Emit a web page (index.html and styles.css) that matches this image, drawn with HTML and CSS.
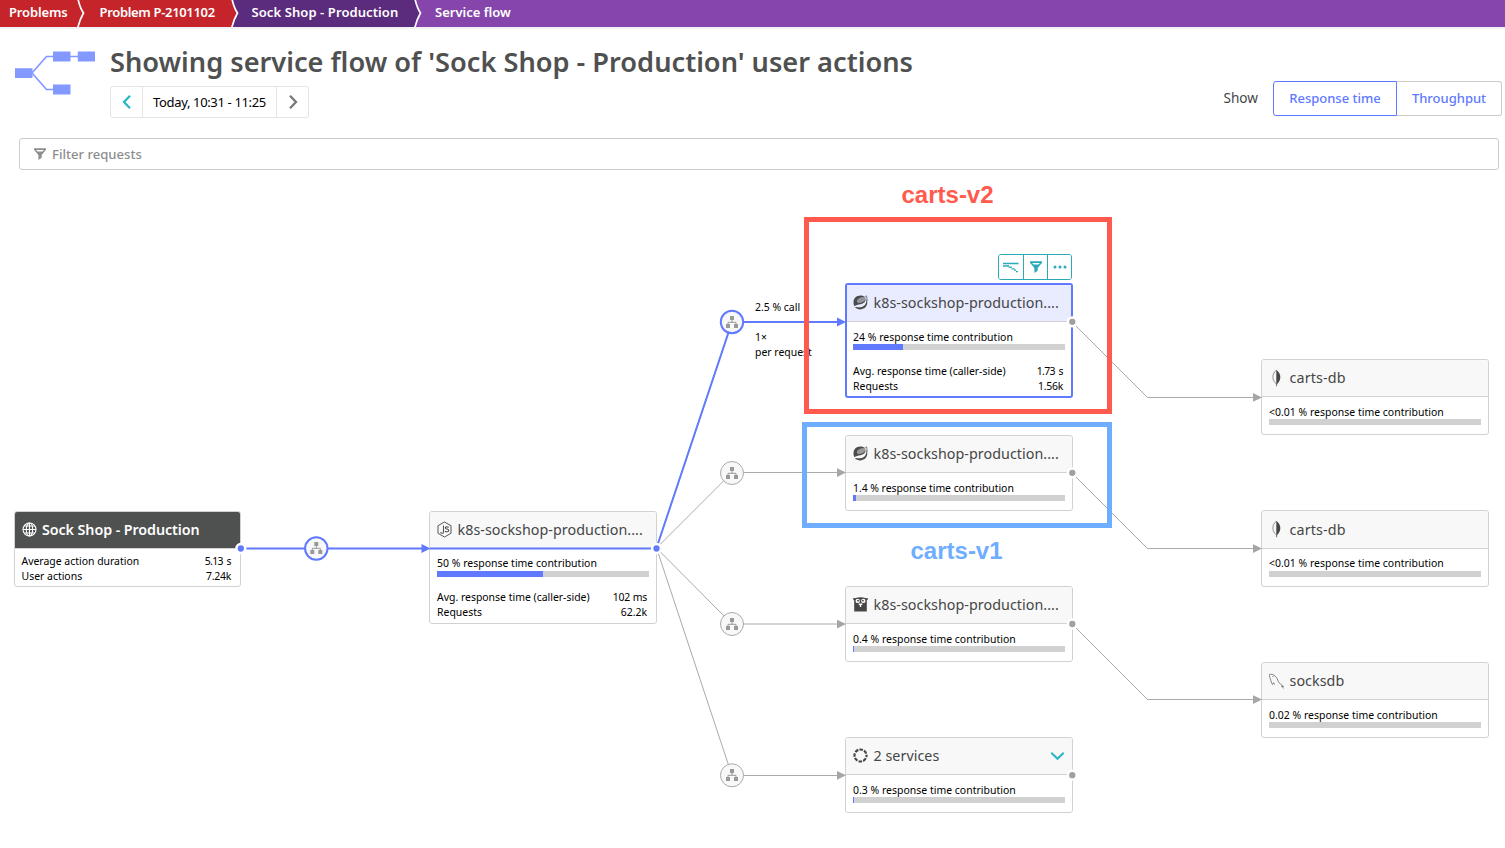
FILE: index.html
```html
<!DOCTYPE html>
<html lang="en">
<head>
<meta charset="utf-8">
<title>Service flow</title>
<link rel="stylesheet" href="styles.css">
</head>
<body>
<svg class="defs" width="0" height="0" aria-hidden="true">
  <symbol id="spring" viewBox="0 0 15 15">
    <path fill="#4b4c4c" d="M1.500 11.300C-.6 7.500.6 2.800 4.400 1.100C7.300-.1 10.300.4 12.200 2.200C8.500 2 5.500 2.800 4.200 5.200C3.600 6.800 4.300 7.700 6 7.800C8.700 7.900 11.300 6.500 12.700 3.800C12.800 6.700 10.600 8.500 7.500 9.200C5.200 9.700 2.800 9.900 1.500 11.300Z"/>
    <path fill="#4b4c4c" fill-opacity=".55" d="M4.200 5.200C5.500 2.800 8.500 2 12.200 2.200L12.700 3.800C11.300 6.500 8.700 7.900 6 7.800C4.300 7.700 3.600 6.800 4.200 5.200Z"/>
    <path fill="#4b4c4c" d="M1.900 12C4 11.700 5.500 12.300 7.500 12.200C11.200 12 13.500 9.200 13.700 3.800C15.500 8.500 13.300 14.200 7.600 14.400C5 14.400 3.100 13.500 1.900 12Z"/>
    <path fill="none" stroke="#4b4c4c" stroke-width=".7" d="M12.300 1.600L13.500.8Q14.300 3.500 14 6"/>
  </symbol>
  <symbol id="tree" viewBox="0 0 14 14">
    <path fill="#999" d="M5 1h4v4H5zM1 9h4v4H1zM9 9h4v4H9z"/>
    <path fill="none" stroke="#999" d="M7 5v2.500M3 9V7.300h8V9"/>
  </symbol>
  <symbol id="funnel" viewBox="0 0 12 12">
    <path fill="currentColor" fill-rule="evenodd" d="M0 .3h12v1.500L7.700 6.900v2.900L4.400 12V6.900L0 1.800ZM2.200 1.900l1.300 1.700h5l1.300-1.700Z"/>
  </symbol>
  <symbol id="leaf" viewBox="0 0 15 18">
    <path fill="none" stroke="#666" stroke-width=".7" d="M7.500 1C4.500 3.500 3.800 6 3.900 8.600C4.100 11.300 5.500 13.500 7.500 15"/>
    <path fill="#454646" d="M7.300.8C10.500 3.500 11.600 6 11.300 9C11 11.500 9.800 13.300 8.100 14.900V17.300H7.300Z"/>
  </symbol>
</svg>

<nav class="crumbs">
  <a class="crumb red c1">Problems</a>
  <svg class="sep" viewBox="0 0 8 27"><path fill="#c4242a" d="M0 0h8v27H0z"/><path fill="none" stroke="#fff" stroke-width="1.700" d="M1-1Q3 8 6.500 13Q2.500 20 .7 28"/></svg>
  <a class="crumb red c2">Problem P-2101102</a>
  <svg class="sep" viewBox="0 0 8 27"><path fill="#5b2b7e" d="M0 0h8v27H0z"/><path fill="#c4242a" stroke="#fff" stroke-width="1.700" d="M-3-1H1Q3 8 6.500 13Q2.500 20 .7 28H-3z"/></svg>
  <a class="crumb deep c3">Sock Shop - Production</a>
  <svg class="sep" viewBox="0 0 8 27"><path fill="#8545aa" d="M0 0h8v27H0z"/><path fill="#5b2b7e" stroke="#fff" stroke-width="1.700" d="M-3-1H1Q3 8 6.500 13Q2.500 20 .7 28H-3z"/></svg>
  <a class="crumb c4">Service flow</a>
</nav>

<header class="head">
  <svg class="logo" width="80" height="44" viewBox="0 0 80 44">
    <path fill="none" stroke="#8499ff" stroke-width="1.700" d="M17 22L31.500 5.500H64M17 22L31.500 38.500H40"/>
    <path fill="#8499ff" d="M0 17.300h17.500v9.700H0zM38 .6h17.500v9.800H38zM62.800 .6h17.200v9.800H62.800zM38 33.600h17.500v9.800H38z"/>
  </svg>
  <div class="headmain">
    <h1>Showing service flow of 'Sock Shop - Production' user actions</h1>
    <div class="time">
      <button class="arrow"><svg width="12" height="16" viewBox="0 0 12 16"><path fill="none" stroke="#2ab6c4" stroke-width="2.300" d="M9 1.700L3 8l6 6.300"/></svg></button>
      <span class="range">Today, 10:31 - 11:25</span>
      <button class="arrow"><svg width="12" height="16" viewBox="0 0 12 16"><path fill="none" stroke="#777" stroke-width="2.300" d="M3 1.700L9 8l-6 6.300"/></svg></button>
    </div>
  </div>
  <div class="show">
    <span class="showlabel">Show</span>
    <div class="toggle"><button class="opt on">Response time</button><button class="opt off">Throughput</button></div>
  </div>
</header>

<div class="filter"><svg width="12" height="12"><use href="#funnel"/></svg><span>Filter requests</span></div>

<main class="canvas">
  <section class="node sock">
    <div class="title"><svg width="15" height="15" viewBox="0 0 15 15"><g fill="none" stroke="#fff" stroke-width="1.100"><circle cx="7.500" cy="7.500" r="6.500"/><ellipse cx="7.500" cy="7.500" rx="3.200" ry="6.500"/><path d="M7.500 1v13M1 7.500h13M2.200 4h10.600M2.200 11h10.600"/></g></svg><b>Sock Shop - Production</b></div>
    <div class="body"><div class="row"><span>Average action duration</span><span class="num">5.13 s</span></div><div class="row"><span>User actions</span><span class="k">7.24k</span></div></div>
  </section>

  <section class="node front">
    <div class="title"><svg width="15" height="17" viewBox="0 0 15 17"><path fill="none" stroke="#555" d="M7.500 1l6.500 3.700v7.600L7.500 16L1 12.300V4.700Z"/><path fill="none" stroke="#555" stroke-width="1.100" d="M6.500 4.600v6.300q0 1.300-1.200 1.300q-1.300 0-1.900-.8M11.800 6.200q-3.300-1-3.400.7c0 1.500 3.400.8 3.400 2.500c0 1.800-2.900 1.500-3.800.8"/></svg><span>k8s-sockshop-production....</span></div>
    <div class="body"><div class="share">50 % response time contribution</div><div class="bar"><i style="width:50%"></i></div>
    <div class="rows"><div class="row"><span>Avg. response time (caller-side)</span><span class="ms">102 ms</span></div><div class="row"><span>Requests</span><span>62.2k</span></div></div></div>
  </section>

  <section class="node v2">
    <div class="title"><svg width="15" height="15"><use href="#spring"/></svg><span>k8s-sockshop-production....</span></div>
    <div class="body"><div class="share">24 % response time contribution</div><div class="bar"><i style="width:23.6%"></i></div>
    <div class="rows"><div class="row"><span>Avg. response time (caller-side)</span><span class="num">1.73 s</span></div><div class="row"><span>Requests</span><span class="k">1.56k</span></div></div></div>
  </section>

  <section class="node v1">
    <div class="title"><svg width="15" height="15"><use href="#spring"/></svg><span>k8s-sockshop-production....</span></div>
    <div class="body"><div class="share tight">1.4 % response time contribution</div><div class="bar"><i style="width:1.4%"></i></div></div>
  </section>

  <section class="node go">
    <div class="title"><svg width="15" height="15" viewBox="0 0 15 15"><path fill="#454646" d="M0 1.500Q.5.500 2 1.200Q7.500-.7 13 1.200Q14.500.5 15 1.500Q15 2.800 13.800 3.400V14.500H1.200V3.400Q0 2.800 0 1.500Z"/><circle cx="4.700" cy="3.900" r="2.200" fill="#fff"/><circle cx="10.300" cy="3.900" r="2.200" fill="#fff"/><circle cx="5.100" cy="3.700" r=".9" fill="#454646"/><circle cx="9.900" cy="3.700" r=".9" fill="#454646"/><path fill="#fff" d="M5.700 6.500h3.600v1.500H8.200v2H6.800V8H5.700z"/></svg><span>k8s-sockshop-production....</span></div>
    <div class="body"><div class="share">0.4 % response time contribution</div><div class="bar"><i style="width:.4%"></i></div></div>
  </section>

  <section class="node two">
    <div class="title"><svg width="15" height="15" viewBox="0 0 15 15"><circle cx="7.500" cy="7.500" r="6" fill="none" stroke="#454646" stroke-width="2.200" stroke-dasharray="3.500 1.212" stroke-dashoffset="1.750"/></svg><span>2 services</span><svg class="chev" width="15" height="10" viewBox="0 0 15 10"><path fill="none" stroke="#2ab6c4" stroke-width="2" d="M1.300 1.800L7.500 7.800L13.700 1.800"/></svg></div>
    <div class="body"><div class="share">0.3 % response time contribution</div><div class="bar"><i style="width:.3%"></i></div></div>
  </section>

  <section class="node db1">
    <div class="title"><svg width="15" height="18"><use href="#leaf"/></svg><span class="cdb">carts-db</span></div>
    <div class="body"><div class="share">&lt;0.01 % response time contribution</div><div class="bar"></div></div>
  </section>
  <section class="node db2">
    <div class="title"><svg width="15" height="18"><use href="#leaf"/></svg><span class="cdb">carts-db</span></div>
    <div class="body"><div class="share">&lt;0.01 % response time contribution</div><div class="bar"></div></div>
  </section>
  <section class="node db3">
    <div class="title"><svg width="15" height="16" viewBox="0 0 15 16"><path fill="none" stroke="#777" stroke-width=".9" d="M3.500 11.500L2.200 8.800Q1.500 5.500.3 3Q-.3 1 1.500 1.200Q5.500 1 8 5.200Q9.200 9.500 11.500 11.200L14.500 13.500L12.500 13.300L14.800 15.300M3.500 11.500L4.600 9.700L5.500 11.500"/><circle cx="4" cy="3.600" r=".5" fill="#777"/></svg><span>socksdb</span></div>
    <div class="body"><div class="share">0.02 % response time contribution</div><div class="bar"></div></div>
  </section>

  <svg class="edges" width="1505" height="678" viewBox="0 170 1505 678">
    <g fill="none" stroke="#aaa">
      <path d="M656.500 548L732 472.500H838M656.500 548L732 624H838M656.500 548L732 775.500H838"/>
      <path d="M1072 322L1147.500 397.500H1254M1072 473L1147.500 548.500H1254M1072 624L1147.500 699.500H1254"/>
    </g>
    <g fill="none" stroke="#6079ff" stroke-width="2">
      <path d="M245 548.500H423M430 548.500H652M656.500 548L732 322H838"/>
    </g>
    <path fill="#a6a6a6" d="M837 468.300v8.700l9-4.400zM837 619.700v8.700l9-4.400zM837 771v8.700l9-4.400zM1253 393v8.700l9-4.300zM1253 544.200v8.700l9-4.400zM1253 695.200v8.700l9-4.400z"/>
    <path fill="#6079ff" d="M837 317.500v9l9-4.500zM421.500 544v9l9-4.500z"/>
    <g stroke="#fff" stroke-width="2.500">
      <g fill="#6079ff"><circle cx="240.800" cy="548.500" r="4.400"/><circle cx="656.500" cy="548.500" r="4.400"/></g>
      <g fill="#a0a0a0"><circle cx="1072.300" cy="321.800" r="4.400"/><circle cx="1072.300" cy="472.800" r="4.400"/><circle cx="1072.300" cy="624" r="4.400"/><circle cx="1072.300" cy="775.200" r="4.400"/></g>
    </g>
    <g fill="#f8f8f8" stroke="#aaa"><circle cx="732" cy="473" r="11.500"/><circle cx="732" cy="624" r="11.500"/><circle cx="732" cy="775.300" r="11.500"/></g>
    <g fill="#f8f8f8" stroke="#6079ff" stroke-width="2"><circle cx="732" cy="322" r="11.200"/><circle cx="316.300" cy="548.500" r="11.200"/></g>
    <use href="#tree" x="725" y="315" width="14" height="14"/>
    <use href="#tree" x="725" y="466" width="14" height="14"/>
    <use href="#tree" x="725" y="617" width="14" height="14"/>
    <use href="#tree" x="725" y="768" width="14" height="14"/>
    <use href="#tree" x="309.300" y="541" width="14" height="14"/>
  </svg>

  <div class="calls">2.5 % call</div>
  <div class="per">1×<br>per request</div>

  <div class="tools">
    <button><svg width="16" height="12" viewBox="0 0 16 12"><path fill="none" stroke="#2aa9b8" stroke-width="1.300" d="M0 2.500h15.500M0 5h6M5.500 6.200h3.500M8.500 7.800h3M11 9.200h2.200M13 10.600h2"/></svg></button>
    <button><svg width="12" height="12"><use href="#funnel"/></svg></button>
    <button><svg width="14" height="4" viewBox="0 0 14 4"><g fill="#2aa9b8"><circle cx="2" cy="2" r="1.500"/><circle cx="7" cy="2" r="1.500"/><circle cx="12" cy="2" r="1.500"/></g></svg></button>
  </div>

  <div class="mark redmark"></div>
  <div class="mark bluemark"></div>
  <div class="tag redtag">carts-v2</div>
  <div class="tag bluetag">carts-v1</div>
</main>
</body>
</html>
```
FILE: styles.css
```css
* { box-sizing: border-box; }
body {
  margin: 0;
  width: 1505px;
  height: 848px;
  overflow: hidden;
  background: #fff;
  color: #111;
  font-family: "Noto Sans", "Open Sans", sans-serif;
}
button { padding: 0; margin: 0; background: #fff; font-family: inherit; }
svg { display: block; flex: none; }
.defs { position: absolute; }

.crumbs { display: flex; height: 29px; border-bottom: 2px solid #f2f2f4; background: #8545aa; background-clip: padding-box; }
.crumb { flex: none; height: 27px; line-height: 24px; color: #fff; font-size: 13px; font-weight: 600; white-space: nowrap; }
.sep { width: 8px; height: 27px; }
.red { background: #c4242a; }
.deep { background: #5b2b7e; }
.c1 { width: 77px; padding-left: 9px; letter-spacing: -.15px; }
.c2 { width: 146px; padding-left: 14.500px; letter-spacing: -.33px; }
.c3 { width: 175px; padding-left: 12.500px; letter-spacing: .09px; }
.c4 { padding-left: 13px; }

.head { display: flex; height: 109px; padding: 0 3px 0 15px; }
.logo { margin-top: 21.500px; }
.headmain { flex: 1; padding: 14px 0 0 15px; }
h1 { margin: 0; height: 38px; line-height: 38px; font-size: 27.200px; font-weight: 600; color: #4f5050; white-space: nowrap; }
.time { display: flex; width: 199px; height: 32px; margin-top: 5px; border: 1px solid #e4e4e4; border-radius: 3px; }
.arrow { display: flex; align-items: center; justify-content: center; width: 32px; border: 0; background: none; }
.arrow:first-child { width: 31px; }
.arrow:last-child { width: 31px; }
.range { flex: 1; border: solid #e4e4e4; border-width: 0 1px; line-height: 30px; text-align: center; font-size: 13px; letter-spacing: -.35px; color: #000; }
.show { display: flex; gap: 15px; height: 35px; margin-top: 52px; align-items: center; }
.showlabel { margin-top: -2px; font-size: 13.600px; color: #454646; }
.toggle { display: flex; height: 35px; }
.opt { height: 35px; padding-bottom: 2px; font-size: 13px; font-weight: 500; color: #6079ff; }
.on { width: 124px; border: 1px solid #6079ff; border-radius: 3px 0 0 3px; }
.off { width: 105px; border: 1px solid #ccc; border-left: 0; border-radius: 0 3px 3px 0; }

.filter { display: flex; align-items: center; gap: 6px; width: 1480px; height: 32px; margin-left: 19px; padding-left: 14px; border: 1px solid #ccc; border-radius: 3px; font-size: 13.100px; font-weight: 500; color: #8d8d8d; }

.canvas { position: relative; height: 678px; }
.edges { position: absolute; left: 0; top: 0; }
.node { position: absolute; width: 228px; height: 76px; border: 1px solid #d2d2d2; border-radius: 3px; background: #fff; overflow: hidden; }
.title { display: flex; align-items: center; gap: 5.500px; height: 37px; padding: 0 7px 1px; border-bottom: 1px solid #d2d2d2; background: #f8f8f8; font-size: 14.300px; color: #454646; white-space: nowrap; }
.title span { letter-spacing: .04px; }
.title b { font-weight: 600; letter-spacing: -.08px; }
.chev { margin-left: auto; }
.body { padding: 8px 7px 0; font-size: 10.450px; line-height: 15px; color: #000; white-space: nowrap; }
.share { height: 14px; line-height: 15px; letter-spacing: .02px; }
.tight { letter-spacing: -.04px; }
.bar { height: 6px; background: #d1d1d1; }
.bar i { display: block; height: 6px; background: #6079ff; }
.rows { padding-top: 14px; }
.row { display: flex; justify-content: space-between; padding-right: 2px; }
.num { letter-spacing: -.6px; word-spacing: 1.500px; }
.k { letter-spacing: -.25px; }
.ms { letter-spacing: -.2px; }
.title .cdb { letter-spacing: .15px; }

.sock { left: 14px; top: 341px; width: 227px; }
.sock .title { background: #4f5050; color: #fff; gap: 5px; }
.sock .body { padding: 5px 7px 0 6.500px; }
.front { left: 429px; top: 341px; height: 113px; }
.front .body { padding-top: 7px; }
.front .share, .db2 .share { height: 15px; }
.front .rows { padding-top: 13px; }
.v2 { left: 845px; top: 113px; height: 115px; border: 2px solid #6079ff; }
.v2 .title { padding: 0 6px 1px; background: #e9ecff; }
.v2 .body { padding: 8px 6px 0; }
.v1 { left: 845px; top: 265px; }
.go { left: 845px; top: 416px; }
.two { left: 845px; top: 567px; }
.db1 { left: 1261px; top: 189px; }
.db2 { left: 1261px; top: 340px; height: 77px; }
.db2 .title { height: 38px; }
.db2 .body { padding-top: 7px; }
.db3 { left: 1261px; top: 492px; }

.calls, .per { position: absolute; left: 755px; font-size: 10.450px; line-height: 15px; color: #000; white-space: nowrap; }
.calls { top: 130px; }
.per { top: 160px; }
.tools { position: absolute; left: 998px; top: 84px; display: flex; width: 74px; height: 26px; border: 1px solid #2aa9b8; border-radius: 3px; overflow: hidden; }
.tools button { display: flex; width: 24px; align-items: center; justify-content: center; border: 0; color: #2aa9b8; }
.tools button + button { border-left: 1px solid #2aa9b8; }
.mark { position: absolute; border: 5px solid; }
.redmark { left: 804px; top: 47px; width: 308px; height: 197px; color: #ff5a4d; }
.bluemark { left: 802px; top: 252px; width: 310px; height: 106px; color: #6faeff; }
.tag { position: absolute; font: bold 24px/28px "Liberation Sans", Arial, sans-serif; }
.redtag { left: 901.500px; top: 11px; color: #ff5a4d; }
.bluetag { left: 910.500px; top: 367px; color: #6faeff; }
```
